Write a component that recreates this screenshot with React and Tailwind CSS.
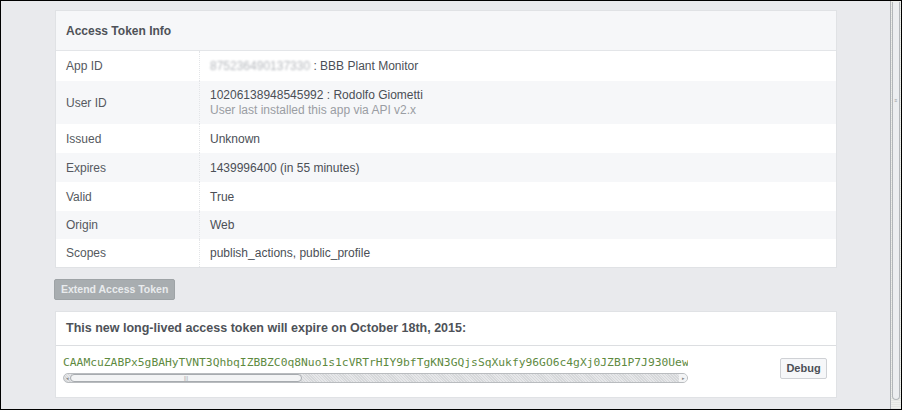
import React from 'react'

const ROWS = [
  { label: 'App ID', kind: 'app', h: 'h-[30px]', bg: 'bg-white' },
  { label: 'User ID', kind: 'user', h: 'h-[43px]', bg: 'bg-[#f6f7f9]' },
  { label: 'Issued', value: 'Unknown', h: 'h-[29px]', bg: 'bg-white' },
  { label: 'Expires', value: '1439996400 (in 55 minutes)', h: 'h-[29px]', bg: 'bg-[#f6f7f9]' },
  { label: 'Valid', value: 'True', h: 'h-[29px]', bg: 'bg-white' },
  { label: 'Origin', value: 'Web', h: 'h-[28px]', bg: 'bg-[#f6f7f9]' },
  { label: 'Scopes', value: 'publish_actions, public_profile', h: 'h-[28px]', bg: 'bg-white' },
]

const TOKEN =
  'CAAMcuZABPx5gBAHyTVNT3QhbqIZBBZC0q8Nuo1s1cVRTrHIY9bfTgKN3GQjsSqXukfy96GO6c4gXj0JZB1P7J930UewZAqP4nZCkZBx'

function Value({ row }) {
  if (row.kind === 'app') {
    return (
      <span>
        <span className="inline-block blur-[1.3px] text-[#b5b8bd]">875236490137330</span> : BBB Plant Monitor
      </span>
    )
  }
  if (row.kind === 'user') {
    return (
      <div className="leading-[15px]">
        <div>10206138948545992 : Rodolfo Giometti</div>
        <div className="text-[#9a9da3]">User last installed this app via API v2.x</div>
      </div>
    )
  }
  return <span>{row.value}</span>
}

function HScrollbar() {
  return (
    <div className="flex h-[10px] w-[625px] items-center rounded-[5px] border border-[#b9bcbf] bg-[repeating-linear-gradient(45deg,#d6d8da_0px,#d6d8da_1px,#e6e7e9_1px,#e6e7e9_2px)]">
      <div className="flex h-full w-[6px] items-center justify-center text-[5px] leading-none text-[#888]">◂</div>
      <div className="flex h-[8px] w-[232px] items-center justify-center rounded-[4px] border border-[#a7abaf] bg-[#f3f4f5]">
        <span className="text-[5px] leading-none text-[#999]">|||</span>
      </div>
      <div className="flex-1" />
      <div className="flex h-full w-[8px] items-center justify-center rounded-r-[5px] bg-[#f3f4f5] text-[5px] leading-none text-[#888]">▸</div>
    </div>
  )
}

export default function App() {
  return (
    <div className="flex h-[410px] w-[902px] border border-black bg-[#e9eaed] font-['Liberation_Sans',Arial,sans-serif] text-[12px] text-[#4b4f56]">
      <div className="flex flex-1 flex-col pl-[54px] pr-[53px] pt-[9px]">
        <section className="border border-[#e0e2e5] bg-white">
          <div className="flex h-[40px] items-center border-b border-[#e3e5e8] bg-[#f6f7f9] px-[10px] font-bold text-[#4e5258]">
            Access Token Info
          </div>
          {ROWS.map((row) => (
            <div key={row.label} className={`flex ${row.h} ${row.bg}`}>
              <div className="flex w-[144px] items-center border-r border-dotted border-[#e3e5e8] pl-[10px] text-[#555960]">
                {row.label}
              </div>
              <div className="flex flex-1 items-center pl-[10px]">
                <Value row={row} />
              </div>
            </div>
          ))}
        </section>

        <div className="mt-[11px] -ml-px">
          <button className="h-[21px] rounded-[2px] border border-[#9ea3a6] bg-[#a8adb0] px-[6px] text-[10.5px] font-bold text-[#e9ebed]">
            Extend Access Token
          </button>
        </div>

        <section className="mt-[11px] border border-[#e0e2e5] bg-white">
          <div className="flex h-[34px] items-center border-b border-[#dcdee1] px-[10px] text-[12.5px] font-bold text-[#4e5258]">
            This new long-lived access token will expire on October 18th, 2015:
          </div>
          <div className="flex h-[51px] items-start justify-between pl-[7px] pr-[9px] pt-[10px]">
            <div className="flex w-[625px] flex-col gap-[3px]">
              <div className="overflow-hidden whitespace-nowrap font-['DejaVu_Sans_Mono',monospace] text-[11.3px] leading-[14px] text-[#5e8a3f]">
                {TOKEN}
              </div>
              <HScrollbar />
            </div>
            <button className="mt-[2px] h-[21px] w-[47px] rounded-[2px] border border-[#cfd1d5] bg-[#f6f7f9] text-[11px] font-bold text-[#4b4f56]">
              Debug
            </button>
          </div>
        </section>
      </div>

      <div className="flex w-[11px] border-l border-[#aeb2b6] bg-[repeating-linear-gradient(0deg,#e4e6e2_0px,#e4e6e2_1px,#eef0ec_1px,#eef0ec_2px)] p-px">
        <div className="flex h-[398px] w-full items-center justify-center rounded-b-[5px] border border-t-0 border-[#b3b7ba] bg-[#eceef0] pb-[200px]">
          <span className="text-[5px] leading-none text-[#999]">≡</span>
        </div>
      </div>
    </div>
  )
}
